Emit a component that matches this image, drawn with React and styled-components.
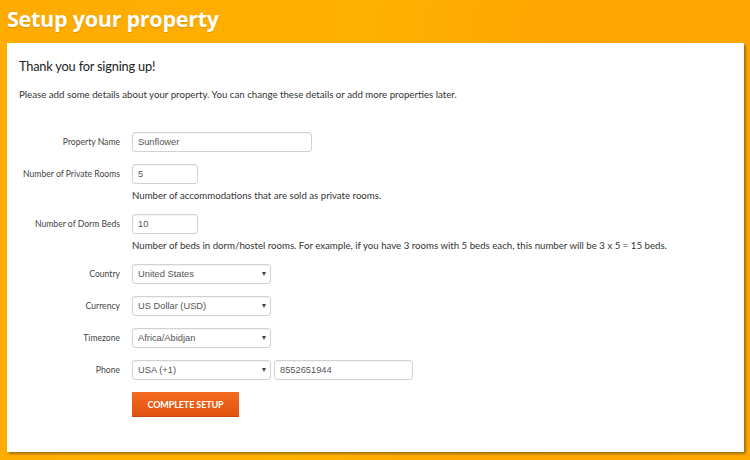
import React from "react";
import styled, { createGlobalStyle } from "styled-components";

const Global = createGlobalStyle`
  html, body { margin: 0; padding: 0; }
  body { font-family: Lato, "Open Sans", sans-serif; }
  * { box-sizing: border-box; }
`;

const Page = styled.div`
  width: 750px;
  height: 460px;
  overflow: hidden;
  background: linear-gradient(100deg, #ffab00 0%, #ffb000 45%, #ffa400 70%, #ffa800 100%);
  display: flex;
  flex-direction: column;
`;

const Header = styled.h1`
  margin: 0;
  height: 43px;
  padding: 4px 0 0 7px;
  font-family: "Open Sans", Lato, sans-serif;
  font-weight: 700;
  font-size: 21.6px;
  letter-spacing: -0.3px;
  line-height: 30px;
  color: #fff;
  text-shadow: 0 1px 1px rgba(160, 90, 0, 0.35);
`;

const Panel = styled.div`
  margin-left: 7px;
  width: 737px;
  height: 409px;
  background: #fff;
  box-shadow: 2px 2px 2px rgba(90, 70, 20, 0.55);
  padding: 14px 12px 0 12px;
`;

const Thanks = styled.h2`
  margin: 0;
  font-family: Lato, sans-serif;
  font-weight: 400;
  font-size: 12.8px;
  letter-spacing: -0.2px;
  line-height: 18px;
  color: #222;
`;

const Intro = styled.p`
  margin: 12px 0 0 0;
  font-family: Lato, sans-serif;
  font-size: 9.7px;
  line-height: 14px;
  color: #333;
`;

const Form = styled.div`
  margin-top: 31px;
  margin-left: -12px;
  display: flex;
  flex-direction: column;
  gap: 12px;
`;

const Row = styled.div`
  display: grid;
  grid-template-columns: 113px auto;
  column-gap: 12px;
  align-items: start;
`;

const Label = styled.label`
  height: 20px;
  display: flex;
  align-items: center;
  justify-content: flex-end;
  font-family: Lato, sans-serif;
  font-size: 8.6px;
  color: #444;
  white-space: nowrap;
`;

const Field = styled.div`
  display: flex;
  flex-direction: column;
  align-items: flex-start;
`;

const Controls = styled.div`
  display: flex;
  gap: 3px;
`;

const Input = styled.input`
  width: ${(p) => p.$w}px;
  height: 20px;
  padding: 0 5px;
  border: 1px solid #d2d2d2;
  border-radius: 3px;
  box-shadow: inset 0 1px 1px rgba(0, 0, 0, 0.05);
  font-family: "Liberation Sans", Arial, sans-serif;
  font-size: 9.3px;
  color: #555;
  background: #fff;
  outline: none;
`;

const SelectWrap = styled.div`
  position: relative;
  width: ${(p) => p.$w}px;
  height: 20px;
`;

const Select = styled.select`
  display: block;
  appearance: none;
  -webkit-appearance: none;
  width: 100%;
  height: 20px;
  margin: 0;
  padding: 0 5px;
  border: 1px solid #d2d2d2;
  border-radius: 3px;
  box-shadow: inset 0 1px 1px rgba(0, 0, 0, 0.05);
  font-family: "Liberation Sans", Arial, sans-serif;
  font-size: 9.3px;
  color: #555;
  background: #fff;
  outline: none;
`;

const Arrow = styled.span`
  position: absolute;
  right: 5px;
  top: 8px;
  width: 0;
  height: 0;
  border-left: 2.5px solid transparent;
  border-right: 2.5px solid transparent;
  border-top: 4px solid #444;
  pointer-events: none;
`;

const Help = styled.div`
  margin-top: 4px;
  font-family: Lato, sans-serif;
  font-size: 9.66px;
  line-height: 14px;
  color: #333;
  white-space: nowrap;
`;

const Button = styled.button`
  width: 107px;
  height: 25px;
  border: none;
  border-bottom: 1px solid #c9440a;
  background: linear-gradient(#f36c22, #e2520f);
  color: #fff;
  font-family: Lato, sans-serif;
  font-weight: 700;
  font-size: 9px;
  letter-spacing: -0.1px;
  text-transform: uppercase;
  cursor: pointer;
  padding: 0;
`;

const Drop = ({ w, value }) => (
  <SelectWrap $w={w}>
    <Select defaultValue={value}>
      <option>{value}</option>
    </Select>
    <Arrow />
  </SelectWrap>
);

export default function App() {
  return (
    <Page>
      <Global />
      <Header>Setup your property</Header>
      <Panel>
        <Thanks>Thank you for signing up!</Thanks>
        <Intro>
          Please add some details about your property. You can change these details or add more properties later.
        </Intro>
        <Form>
          <Row>
            <Label>Property Name</Label>
            <Field>
              <Input $w={180} defaultValue="Sunflower" />
            </Field>
          </Row>
          <Row>
            <Label>Number of Private Rooms</Label>
            <Field>
              <Input $w={66} defaultValue="5" />
              <Help>Number of accommodations that are sold as private rooms.</Help>
            </Field>
          </Row>
          <Row>
            <Label>Number of Dorm Beds</Label>
            <Field>
              <Input $w={66} defaultValue="10" />
              <Help>
                Number of beds in dorm/hostel rooms. For example, if you have 3 rooms with 5 beds each, this number will be 3 x 5 = 15 beds.
              </Help>
            </Field>
          </Row>
          <Row>
            <Label>Country</Label>
            <Field>
              <Drop w={139} value="United States" />
            </Field>
          </Row>
          <Row>
            <Label>Currency</Label>
            <Field>
              <Drop w={139} value="US Dollar (USD)" />
            </Field>
          </Row>
          <Row>
            <Label>Timezone</Label>
            <Field>
              <Drop w={139} value="Africa/Abidjan" />
            </Field>
          </Row>
          <Row>
            <Label>Phone</Label>
            <Controls>
              <Drop w={139} value="USA (+1)" />
              <Input $w={139} defaultValue="8552651944" />
            </Controls>
          </Row>
          <Row>
            <span />
            <Field>
              <Button>Complete Setup</Button>
            </Field>
          </Row>
        </Form>
      </Panel>
    </Page>
  );
}
